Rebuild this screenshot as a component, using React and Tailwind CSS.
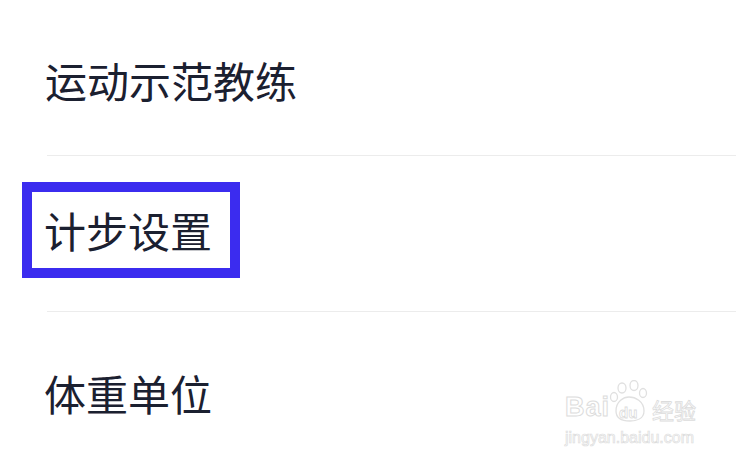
import React from "react";

const cjk = { fontFamily: '"Noto Sans CJK SC", "Noto Sans", sans-serif' };
const latin = { fontFamily: '"Liberation Sans", sans-serif' };

function Watermark() {
  return (
    <div className="absolute left-[565px] top-[380px] flex flex-col pointer-events-none select-none">
      <div className="flex items-end">
        <div
          className="text-[27px] leading-none font-bold text-transparent [-webkit-text-stroke:1px_#dcdcdc] tracking-[1px] mb-[1px]"
          style={latin}
        >
          Bai
        </div>
        <div className="relative w-[44px] h-[42px] -ml-[2px]">
          <svg width="44" height="42" viewBox="0 0 44 42" fill="none" stroke="#e0e0e0" strokeWidth="1.3">
            <ellipse cx="14" cy="8" rx="4" ry="5" />
            <ellipse cx="26" cy="5.5" rx="4" ry="5" />
            <ellipse cx="6" cy="17" rx="3.5" ry="4.5" />
            <ellipse cx="35" cy="13" rx="3.5" ry="4.5" />
            <path d="M8 31 C8 21 16 17 21 17 C27 17 36 21 36 31 C36 39 28 41 22 41 C15 41 8 39 8 31 Z" />
          </svg>
          <div
            className="absolute left-[11px] top-[25px] text-[15px] leading-none font-bold text-transparent [-webkit-text-stroke:0.8px_#dcdcdc]"
            style={latin}
          >
            du
          </div>
        </div>
        <div
          className="text-[22px] leading-none text-transparent [-webkit-text-stroke:0.8px_#dcdcdc] mb-[2px]"
          style={cjk}
        >
          经验
        </div>
      </div>
      <div
        className="mt-[8px] text-[16px] leading-none text-transparent [-webkit-text-stroke:0.7px_#dcdcdc]"
        style={latin}
      >
        jingyan.baidu.com
      </div>
    </div>
  );
}

export default function App() {
  return (
    <div className="relative w-[736px] h-[460px] overflow-hidden bg-white text-[#1b2030]" style={cjk}>
      <div className="flex flex-col">
        {/* row 1 */}
        <div className="h-[155px] pt-[59px] pl-[45px]">
          <div className="text-[42px] leading-none">运动示范教练</div>
        </div>
        <div className="ml-[47px] h-px bg-[#ececec]" />

        {/* row 2 */}
        <div className="h-[155px] pt-[26px] pl-[22px]">
          <div className="w-[218px] h-[96px] border-[10px] border-[#3b2cef] flex items-center pl-[12px]">
            <div className="text-[42px] leading-none">计步设置</div>
          </div>
        </div>
        <div className="ml-[47px] h-px bg-[#ececec]" />

        {/* row 3 */}
        <div className="pt-[60px] pl-[44px]">
          <div className="text-[42px] leading-none">体重单位</div>
        </div>
      </div>

      <Watermark />
    </div>
  );
}
